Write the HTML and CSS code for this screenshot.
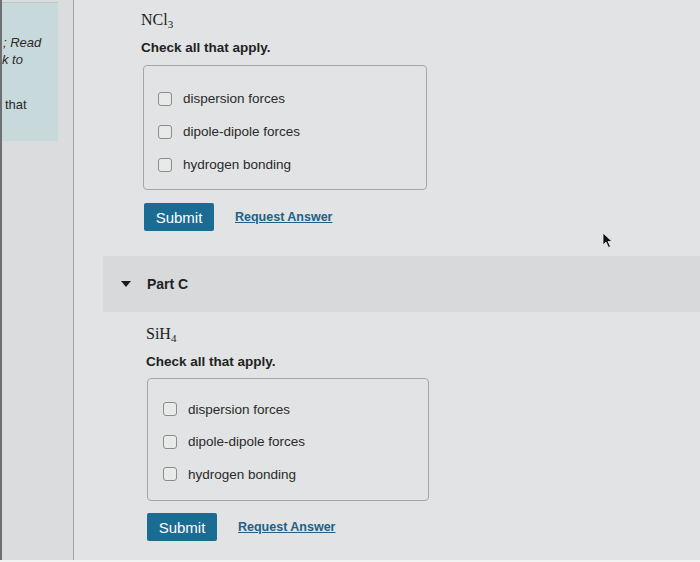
FILE: index.html
```
<!DOCTYPE html>
<html>
<head>
<meta charset="utf-8">
<link rel="stylesheet" href="styles.css">
</head>
<body>
<div class="page">
  <aside class="sidebar">
    <div class="note">
      <p class="it l1">; Read</p>
      <p class="it l2">k to</p>
      <p class="l3">that</p>
    </div>
  </aside>
  <main class="main">
    <section class="part part-b">
      <div class="formula">NCl<sub>3</sub></div>
      <div class="instr">Check all that apply.</div>
      <div class="choices">
        <label class="choice"><span class="cb"></span>dispersion forces</label>
        <label class="choice"><span class="cb"></span>dipole-dipole forces</label>
        <label class="choice"><span class="cb"></span>hydrogen bonding</label>
      </div>
      <div class="actions">
        <button class="submit">Submit</button>
        <a class="req">Request Answer</a>
      </div>
    </section>
    <div class="band">
      <span class="tri"></span>
      <span class="band-title">Part C</span>
    </div>
    <section class="part part-c">
      <div class="formula">SiH<sub>4</sub></div>
      <div class="instr">Check all that apply.</div>
      <div class="choices">
        <label class="choice"><span class="cb"></span>dispersion forces</label>
        <label class="choice"><span class="cb"></span>dipole-dipole forces</label>
        <label class="choice"><span class="cb"></span>hydrogen bonding</label>
      </div>
      <div class="actions">
        <button class="submit">Submit</button>
        <a class="req">Request Answer</a>
      </div>
    </section>
    <svg class="cursor" width="12" height="18" viewBox="0 0 12 18"><path d="M1 1 L1 13 L4 10 L6.5 15.5 L8.5 14.5 L6 9.5 L10 9.5 Z" fill="#111" stroke="#eee" stroke-width="0.8"/></svg>
  </main>
</div>
</body>
</html>
```
FILE: styles.css
```
html, body {
  margin: 0;
  padding: 0;
}
body {
  background: #dfe1e2;
  font-family: "Liberation Sans", Arial, sans-serif;
  color: #1e1e1e;
  width: 700px;
  height: 562px;
  overflow: hidden;
}
.page {
  display: flex;
  height: 560px;
  border-bottom: 2px solid #f1f2f2;
}
.sidebar {
  width: 71px;
  flex: none;
  background: #dadcdd;
  border-left: 2px solid #6d6f70;
  border-right: 1px solid #a2a4a5;
  padding-top: 2px;
}
.note {
  width: 56px;
  height: 138px;
  background: #c8d9dc;
  border-top: 1px solid #b7c6c9;
  font-size: 13px;
  color: #2a2a2a;
}
.note p {
  margin: 0;
  line-height: 17px;
}
.note .it { font-style: italic; }
.note .l1 { padding-top: 31px; padding-left: 1px; }
.note .l2 { padding-left: 0; }
.note .l3 { padding-top: 28px; padding-left: 3px; }
.main {
  flex: 1;
  position: relative;
  background: #e1e3e4;
}
.part-b {
  padding: 10px 0 0 67px;
}
.formula {
  font-family: "Liberation Serif", "Times New Roman", serif;
  font-size: 16px;
  line-height: 20px;
  color: #222;
}
.formula sub {
  font-size: 11px;
  vertical-align: -3px;
  line-height: 0;
}
.instr {
  font-size: 13.5px;
  font-weight: bold;
  line-height: 20px;
  color: #222;
}
.part-b .instr { margin-top: 8px; }
.choices {
  box-sizing: border-box;
  border: 1px solid #a4a6a7;
  border-radius: 4px;
  display: flex;
  flex-direction: column;
  font-size: 13.5px;
  color: #2a2a2a;
}
.part-b .choices {
  margin: 7px 0 0 2px;
  width: 284px;
  height: 125px;
  padding: 16px 0 0 14px;
}
.choice {
  display: flex;
  align-items: center;
  height: 33px;
}
.cb {
  width: 12px;
  height: 12px;
  border: 1px solid #8a8c8d;
  border-radius: 3px;
  background: #e8eaea;
  margin-right: 11px;
  flex: none;
}
.actions {
  display: flex;
  align-items: center;
  gap: 21px;
}
.part-b .actions { margin: 13px 0 0 3px; }
.submit {
  width: 70px;
  height: 28px;
  border: none;
  border-radius: 2px;
  background: #1b6c93;
  color: #fff;
  font-family: "Liberation Sans", Arial, sans-serif;
  font-size: 15px;
  padding: 0;
}
.req {
  font-size: 12.5px;
  font-weight: bold;
  color: #235f86;
  text-decoration: underline;
}
.band {
  margin: 25px 0 0 29px;
  height: 56px;
  background: #d7d9da;
  display: flex;
  align-items: center;
}
.tri {
  width: 0;
  height: 0;
  border-left: 5px solid transparent;
  border-right: 5px solid transparent;
  border-top: 6px solid #1a1a1a;
  margin-left: 18px;
}
.band-title {
  margin-left: 16px;
  font-size: 14px;
  font-weight: bold;
  color: #222;
}
.part-c {
  padding: 12px 0 0 72px;
}
.part-c .instr { margin-top: 8px; }
.part-c .choices {
  margin: 6px 0 0 1px;
  width: 282px;
  height: 123px;
  padding: 14px 0 0 15px;
}
.part-c .choice { height: 32.5px; }
.part-c .actions { margin: 12px 0 0 1px; }
.cursor {
  position: absolute;
  left: 528px;
  top: 232px;
}
```
